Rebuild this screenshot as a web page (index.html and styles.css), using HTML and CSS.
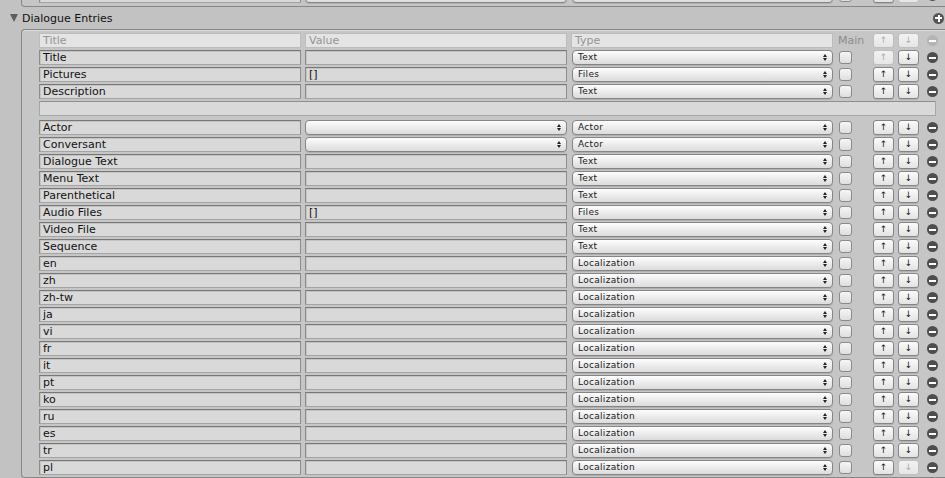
FILE: index.html
```html
<!DOCTYPE html>
<html lang="en">
<head>
    <meta charset="UTF-8">
    <title>Dialogue Entries</title>
    <link rel="stylesheet" href="styles.css">
</head>
<body>
    <div class="prev-box">
        <div class="row">
            <span class="field">Conversant</span>
            <span class="popup"></span>
            <span class="popup">Actor</span>
            <span class="check"></span>
            <span class="btn">↑</span>
            <span class="btn off">↓</span>
            <span class="minus"></span>
        </div>
    </div>

    <div class="foldout">
        <span class="tri"></span>
        <span class="foldout-label">Dialogue Entries</span>
        <span class="plus"></span>
    </div>

    <div class="box">
        <div class="row head">
            <span class="field">Title</span>
            <span class="field">Value</span>
            <span class="field">Type</span>
            <span class="main-label">Main</span>
            <span class="btn off">↑</span>
            <span class="btn off">↓</span>
            <span class="minus off"></span>
        </div>
        <div class="row">
            <span class="field">Title</span>
            <span class="field"></span>
            <span class="popup">Text</span>
            <span class="check"></span>
            <span class="btn off">↑</span>
            <span class="btn">↓</span>
            <span class="minus"></span>
        </div>
        <div class="row">
            <span class="field">Pictures</span>
            <span class="field">[]</span>
            <span class="popup">Files</span>
            <span class="check"></span>
            <span class="btn">↑</span>
            <span class="btn">↓</span>
            <span class="minus"></span>
        </div>
        <div class="row">
            <span class="field">Description</span>
            <span class="field"></span>
            <span class="popup">Text</span>
            <span class="check"></span>
            <span class="btn">↑</span>
            <span class="btn">↓</span>
            <span class="minus"></span>
        </div>
        <div class="desc"></div>

        <div class="row">
            <span class="field">Actor</span>
            <span class="popup"></span>
            <span class="popup">Actor</span>
            <span class="check"></span>
            <span class="btn">↑</span>
            <span class="btn">↓</span>
            <span class="minus"></span>
        </div>
        <div class="row">
            <span class="field">Conversant</span>
            <span class="popup"></span>
            <span class="popup">Actor</span>
            <span class="check"></span>
            <span class="btn">↑</span>
            <span class="btn">↓</span>
            <span class="minus"></span>
        </div>
        <div class="row">
            <span class="field">Dialogue Text</span>
            <span class="field"></span>
            <span class="popup">Text</span>
            <span class="check"></span>
            <span class="btn">↑</span>
            <span class="btn">↓</span>
            <span class="minus"></span>
        </div>
        <div class="row">
            <span class="field">Menu Text</span>
            <span class="field"></span>
            <span class="popup">Text</span>
            <span class="check"></span>
            <span class="btn">↑</span>
            <span class="btn">↓</span>
            <span class="minus"></span>
        </div>
        <div class="row">
            <span class="field">Parenthetical</span>
            <span class="field"></span>
            <span class="popup">Text</span>
            <span class="check"></span>
            <span class="btn">↑</span>
            <span class="btn">↓</span>
            <span class="minus"></span>
        </div>
        <div class="row">
            <span class="field">Audio Files</span>
            <span class="field">[]</span>
            <span class="popup">Files</span>
            <span class="check"></span>
            <span class="btn">↑</span>
            <span class="btn">↓</span>
            <span class="minus"></span>
        </div>
        <div class="row">
            <span class="field">Video File</span>
            <span class="field"></span>
            <span class="popup">Text</span>
            <span class="check"></span>
            <span class="btn">↑</span>
            <span class="btn">↓</span>
            <span class="minus"></span>
        </div>
        <div class="row">
            <span class="field">Sequence</span>
            <span class="field"></span>
            <span class="popup">Text</span>
            <span class="check"></span>
            <span class="btn">↑</span>
            <span class="btn">↓</span>
            <span class="minus"></span>
        </div>
        <div class="row">
            <span class="field">en</span>
            <span class="field"></span>
            <span class="popup">Localization</span>
            <span class="check"></span>
            <span class="btn">↑</span>
            <span class="btn">↓</span>
            <span class="minus"></span>
        </div>
        <div class="row">
            <span class="field">zh</span>
            <span class="field"></span>
            <span class="popup">Localization</span>
            <span class="check"></span>
            <span class="btn">↑</span>
            <span class="btn">↓</span>
            <span class="minus"></span>
        </div>
        <div class="row">
            <span class="field">zh-tw</span>
            <span class="field"></span>
            <span class="popup">Localization</span>
            <span class="check"></span>
            <span class="btn">↑</span>
            <span class="btn">↓</span>
            <span class="minus"></span>
        </div>
        <div class="row">
            <span class="field">ja</span>
            <span class="field"></span>
            <span class="popup">Localization</span>
            <span class="check"></span>
            <span class="btn">↑</span>
            <span class="btn">↓</span>
            <span class="minus"></span>
        </div>
        <div class="row">
            <span class="field">vi</span>
            <span class="field"></span>
            <span class="popup">Localization</span>
            <span class="check"></span>
            <span class="btn">↑</span>
            <span class="btn">↓</span>
            <span class="minus"></span>
        </div>
        <div class="row">
            <span class="field">fr</span>
            <span class="field"></span>
            <span class="popup">Localization</span>
            <span class="check"></span>
            <span class="btn">↑</span>
            <span class="btn">↓</span>
            <span class="minus"></span>
        </div>
        <div class="row">
            <span class="field">it</span>
            <span class="field"></span>
            <span class="popup">Localization</span>
            <span class="check"></span>
            <span class="btn">↑</span>
            <span class="btn">↓</span>
            <span class="minus"></span>
        </div>
        <div class="row">
            <span class="field">pt</span>
            <span class="field"></span>
            <span class="popup">Localization</span>
            <span class="check"></span>
            <span class="btn">↑</span>
            <span class="btn">↓</span>
            <span class="minus"></span>
        </div>
        <div class="row">
            <span class="field">ko</span>
            <span class="field"></span>
            <span class="popup">Localization</span>
            <span class="check"></span>
            <span class="btn">↑</span>
            <span class="btn">↓</span>
            <span class="minus"></span>
        </div>
        <div class="row">
            <span class="field">ru</span>
            <span class="field"></span>
            <span class="popup">Localization</span>
            <span class="check"></span>
            <span class="btn">↑</span>
            <span class="btn">↓</span>
            <span class="minus"></span>
        </div>
        <div class="row">
            <span class="field">es</span>
            <span class="field"></span>
            <span class="popup">Localization</span>
            <span class="check"></span>
            <span class="btn">↑</span>
            <span class="btn">↓</span>
            <span class="minus"></span>
        </div>
        <div class="row">
            <span class="field">tr</span>
            <span class="field"></span>
            <span class="popup">Localization</span>
            <span class="check"></span>
            <span class="btn">↑</span>
            <span class="btn">↓</span>
            <span class="minus"></span>
        </div>
        <div class="row">
            <span class="field">pl</span>
            <span class="field"></span>
            <span class="popup">Localization</span>
            <span class="check"></span>
            <span class="btn">↑</span>
            <span class="btn off">↓</span>
            <span class="minus"></span>
        </div>
    </div>
</body>
</html>
```

FILE: styles.css
```css
body {
    margin: 0;
    width: 945px;
    height: 478px;
    overflow: hidden;
    background: #c2c2c2;
    font-family: "DejaVu Sans", "Liberation Sans", sans-serif;
    font-size: 11px;
    color: #111;
}

/* bottom of the list above, mostly scrolled away */
.prev-box {
    margin: -16px 0 0 21px;
    width: 940px;
    padding: 3px 0 1px 17px;
    border: 1px solid #868686;
    border-right: none;
    border-radius: 4px 0 0 4px;
    background: #c5c5c5;
}

.foldout {
    display: flex;
    align-items: center;
    height: 22px;
    padding-left: 10px;
}

.tri {
    width: 0;
    height: 0;
    border-left: 4.5px solid transparent;
    border-right: 4.5px solid transparent;
    border-top: 8px solid #5e5e5e;
    margin-right: 4px;
}

.plus {
    margin-left: auto;
    margin-right: 1px;
    width: 11px;
    height: 11px;
    border-radius: 50%;
    background: #555;
    position: relative;
}

.plus::before,
.plus::after,
.minus::after {
    content: "";
    position: absolute;
    left: 2px;
    top: 4.5px;
    width: 7px;
    height: 2px;
    background: #fff;
}

.plus::before {
    left: 4.5px;
    top: 2px;
    width: 2px;
    height: 7px;
}

.box {
    margin-left: 21px;
    width: 940px;
    padding: 3px 0 0 17px;
    border: 1px solid #868686;
    border-right: none;
    border-radius: 4px 0 0 4px;
    background: #c6c6c6;
    box-shadow: inset 0 1px 0 #dadada;
}

.row {
    display: grid;
    grid-template-columns: 262px 262px 262px 32px 21px 21px 15px;
    column-gap: 4px;
    align-items: center;
    height: 15px;
    margin-bottom: 2px;
}

.field {
    box-sizing: border-box;
    height: 15px;
    padding: 0 3px;
    border: 1px solid #8c8c8c;
    border-top-color: #777;
    border-bottom-color: #a4a4a4;
    background: #d9d9d9;
    box-shadow: inset 1px 1px 0 #c4c4c4;
    line-height: 13px;
    white-space: nowrap;
    overflow: hidden;
}

.head .field {
    border-color: #bdbdbd;
    background: #e4e4e4;
    box-shadow: none;
    color: #949494;
}

.main-label {
    color: #8c8c8c;
    padding-left: 1px;
    line-height: 15px;
}

.popup {
    position: relative;
    box-sizing: border-box;
    height: 15px;
    padding-left: 5px;
    border: 1px solid #858585;
    border-radius: 4px;
    background: linear-gradient(#fdfdfd, #ececec 50%, #dcdcdc);
    box-shadow: 0 1px 0 #b0b0b0;
    font-size: 9px;
    letter-spacing: 0.3px;
    line-height: 13px;
    color: #1a1a1a;
}

.row > .popup:nth-child(3) {
    margin-left: 1px;
    width: 261px;
}

.popup::before,
.popup::after {
    content: "";
    position: absolute;
    right: 5px;
    width: 0;
    height: 0;
    border-left: 2px solid transparent;
    border-right: 2px solid transparent;
}

.popup::before {
    top: 3px;
    border-bottom: 3px solid #222;
}

.popup::after {
    top: 7px;
    border-top: 3px solid #222;
}

.check {
    box-sizing: border-box;
    width: 13px;
    height: 13px;
    margin-left: 2px;
    border: 1px solid #8a8a8a;
    border-radius: 3px;
    background: linear-gradient(#f6f6f6, #dedede);
}

.btn {
    box-sizing: border-box;
    height: 15px;
    border: 1px solid #858585;
    border-radius: 3px;
    background: linear-gradient(#fbfbfb, #e3e3e3);
    box-shadow: 0 1px 0 #b0b0b0;
    text-align: center;
    font-size: 9px;
    line-height: 13px;
    color: #1a1a1a;
}

.btn.off {
    border-color: #bfbfbf;
    background: linear-gradient(#f2f2f2, #e6e6e6);
    box-shadow: none;
    color: #aaa;
}

.minus {
    position: relative;
    justify-self: end;
    width: 11px;
    height: 11px;
    border-radius: 50%;
    background: #4e4e4e;
}

.minus.off {
    background: #b4b4b4;
}

.desc {
    box-sizing: border-box;
    width: 897px;
    height: 15px;
    margin-bottom: 4px;
    border: 1px solid #a6a6a6;
    border-top-color: #8e8e8e;
    background: #d9d9d9;
}
```
